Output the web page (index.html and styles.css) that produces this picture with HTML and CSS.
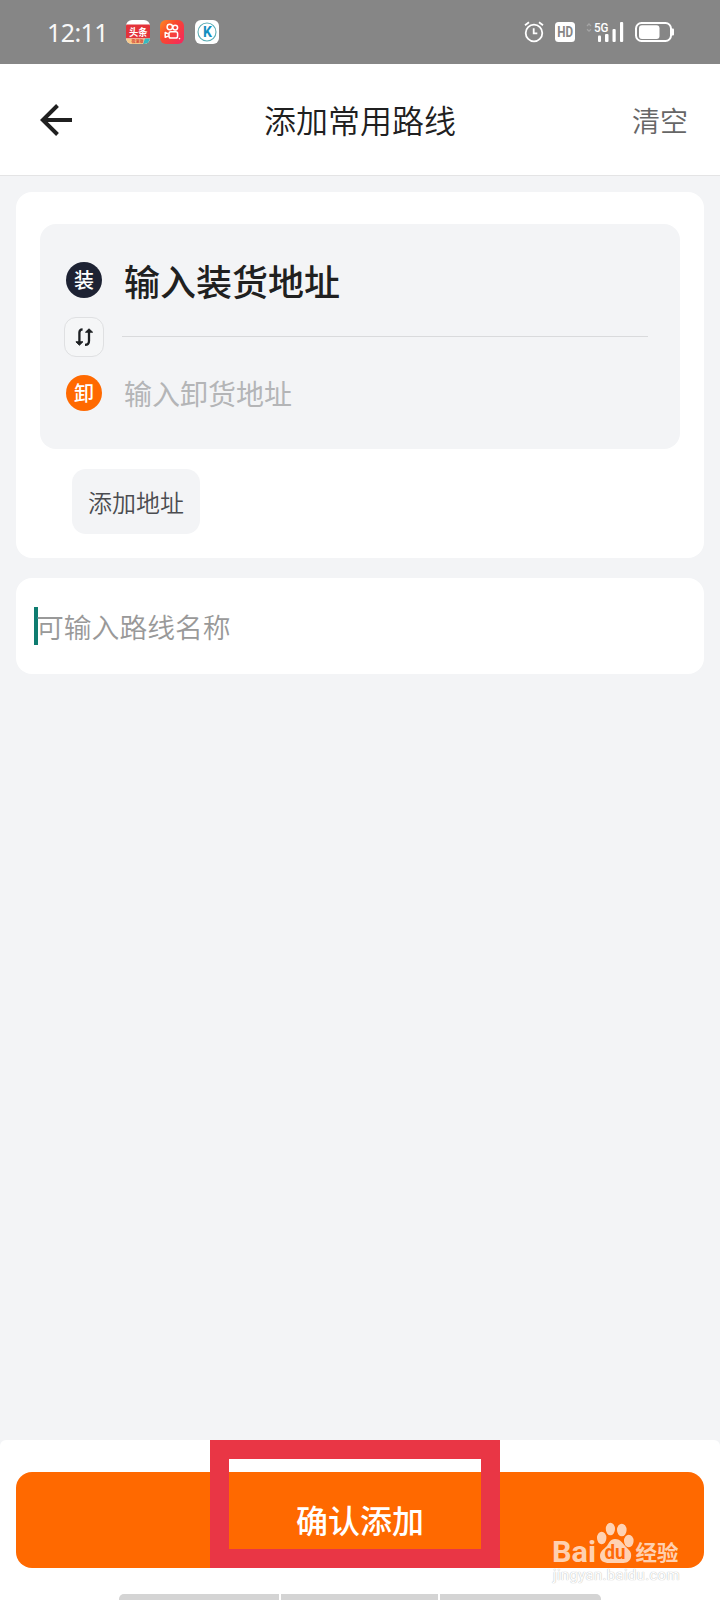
FILE: index.html
```html
<!DOCTYPE html>
<html lang="zh-CN">
<head>
<meta charset="utf-8">
<title>添加常用路线</title>
<link rel="stylesheet" href="styles.css">
</head>
<body>
<div class="screen">
  <div class="status">
    <span class="time">12:11</span>
    <svg class="app" width="24" height="24" viewBox="0 0 24 24">
      <defs><clipPath id="app-shape"><rect width="24" height="24" rx="6"/></clipPath></defs>
      <g clip-path="url(#app-shape)">
        <rect width="24" height="24" fill="#fff"/>
        <rect y="4.5" width="24" height="14" fill="#e3333a"/>
        <rect y="18.5" width="24" height="5.5" fill="#f6c98d"/>
        <path d="M19 18.5h5V24h-7z" fill="#36b9c2"/>
        <text class="cjk-bold" x="3" y="15.6" font-size="10" textLength="18.5" lengthAdjust="spacingAndGlyphs" fill="#fff">头条</text>
        <text class="cjk-bold" x="11.5" y="23" font-size="4" text-anchor="middle" fill="#d64a35">极速版</text>
      </g>
    </svg>
    <svg class="app" width="24" height="24" viewBox="0 0 24 24">
      <defs><linearGradient id="warm" x1="0" y1="0" x2="1" y2=".8"><stop offset="0" stop-color="#ff8a22"/><stop offset=".45" stop-color="#f8482f"/><stop offset="1" stop-color="#f52a5b"/></linearGradient></defs>
      <rect width="24" height="24" rx="6" fill="url(#warm)"/>
      <g fill="none" stroke="#fff" stroke-width="1.5">
        <circle cx="9.8" cy="7" r="2.7"/><circle cx="15.2" cy="7.6" r="2.4"/>
        <rect x="9" y="11.8" width="8.6" height="6.2" rx="1.8"/>
        <path d="M8.8 14.1 5.2 12.5v4.8l3.6-1.4" stroke-linejoin="round"/>
      </g>
      <circle cx="19.5" cy="18.6" r=".8" fill="#fff"/>
    </svg>
    <svg class="app" width="24" height="24" viewBox="0 0 24 24">
      <rect width="24" height="24" rx="6" fill="#fff"/>
      <circle cx="12" cy="12" r="9" fill="none" stroke="#5badb5" stroke-width="1.1"/>
      <text class="latin-bold" x="12.4" y="16.9" font-size="14" text-anchor="middle" fill="#148fc0">K</text>
    </svg>
    <div class="signals">
      <svg class="alarm" width="20" height="22" viewBox="0 0 20 22" fill="none" stroke="#fff">
        <circle cx="10" cy="12" r="8.3" stroke-width="1.8"/>
        <path d="M9.7 7.2v5.2h3.6" stroke-width="1.8"/>
        <path d="M1 4.3 5 1.2M19 4.3 15 1.2" stroke-width="1.8"/>
      </svg>
      <svg class="hd" width="20" height="20" viewBox="0 0 20 20">
        <rect width="20" height="20" rx="3.5" fill="#fff"/>
        <text class="latin-bold" x="2.2" y="15.2" font-size="14" textLength="15.8" lengthAdjust="spacingAndGlyphs" fill="#868686">HD</text>
      </svg>
      <svg class="cell" width="38" height="26" viewBox="0 -2 38 26">
        <path d="M1 5 3 3 5 5M1 8.2 3 10.2 5 8.2" fill="none" stroke="#a4a4a4" stroke-width="1.3"/>
        <text class="latin" x="8" y="11" font-size="13" textLength="14.5" lengthAdjust="spacingAndGlyphs" fill="#fff">5G</text>
        <g fill="#fff"><rect x="12" y="14.5" width="3" height="6.5" rx="1"/><rect x="19" y="13" width="3.5" height="8" rx="1"/><rect x="26.5" y="8" width="3.2" height="13" rx="1"/><rect x="34" y="1" width="3.2" height="20" rx="1"/></g>
      </svg>
      <svg class="battery" width="40" height="20" viewBox="0 0 40 20">
        <rect x="1" y="1" width="35" height="18" rx="5.5" fill="none" stroke="#fff" stroke-width="2"/>
        <rect x="4" y="3.3" width="20.5" height="13.6" rx="3" fill="#fff"/>
        <path d="M37 6.5h1q1 0 1 1v5q0 1-1 1h-1z" fill="#fff"/>
      </svg>
    </div>
  </div>

  <header class="header">
    <svg class="back" width="32" height="34" viewBox="0 0 32 34" fill="none" stroke="#202020" stroke-width="4"><path d="M17.5 2.5 2.8 17 17.5 31.5M3 17h29"/></svg>
    <h1 class="title">添加常用路线</h1>
    <span class="clear">清空</span>
  </header>

  <main class="content">
    <section class="card route">
      <div class="route-box">
        <div class="row"><span class="badge load">装</span><span class="primary">输入装货地址</span></div>
        <div class="row swap-row">
          <span class="swap">
            <svg width="20" height="20" viewBox="0 0 20 20" fill="none" stroke="#1d2023" stroke-width="2.3">
              <path d="M8.6 2.4Q5.4 2.6 5.4 5.5V16M11 17.8Q15 17.8 15 14V4"/>
              <path d="M1.9 14.8h7L5.4 18.2zM11.5 5.2 15 1.8 18.6 5.2z" fill="#1d2023" stroke-width="1" stroke-linejoin="round"/>
            </svg>
          </span>
          <span class="line"></span>
        </div>
        <div class="row"><span class="badge unload">卸</span><span class="secondary">输入卸货地址</span></div>
      </div>
      <span class="add">添加地址</span>
    </section>
    <section class="card name"><span class="caret"></span><span class="placeholder">可输入路线名称</span></section>
  </main>

  <footer class="footer">
    <div class="confirm">确认添加</div>
    <div class="home"><i></i><i></i><i></i></div>
    <div class="highlight"></div>
    <div class="watermark">
      <svg class="logo" width="136" height="50" viewBox="0 0 136 50">
        <g fill="#fff" fill-opacity=".7">
          <text class="latin-bold" x="-1" y="42" font-size="29" textLength="44" lengthAdjust="spacingAndGlyphs">Bai</text>
          <path d="M44 18a4.7 6.2 0 1 0 9.4 0a4.7 6.2 0 1 0-9.4 0zM52.8 9a4.6 6.3 0 1 0 9.2 0a4.6 6.3 0 1 0-9.2 0zM64 10a4.8 6.3 0 1 0 9.6 0a4.8 6.3 0 1 0-9.6 0zM71 21a4.8 6.2 0 1 0 9.6 0a4.8 6.2 0 1 0-9.6 0z"/>
          <path d="M62 19c6 0 8 5 11 8 3 3 6 5 5 10-1 5-5 6-9 6H56c-5 0-9-2-9-7 0-5 4-7 7-10 2-3 3-7 8-7z"/>
          <text class="cjk-bold" x="82.5" y="40" font-size="21" textLength="43" lengthAdjust="spacingAndGlyphs">经验</text>
        </g>
        <text class="latin-bold" x="51.5" y="38.8" font-size="20" textLength="21" lengthAdjust="spacingAndGlyphs" fill="#ff6a08">du</text>
      </svg>
      <span class="site">jingyan.baidu.com</span>
    </div>
  </footer>
</div>
</body>
</html>
```
FILE: styles.css
```css
* { box-sizing: border-box; }
body { margin: 0; background: #f3f4f6; }
.screen {
  width: 720px; height: 1600px; overflow: hidden;
  display: flex; flex-direction: column;
  background: #f3f4f6; color: #202020;
  font-family: "Noto Sans CJK SC", sans-serif;
}
svg { display: block; flex: none; }
.cjk-bold { font-family: "Noto Sans CJK SC", sans-serif; font-weight: 700; }
.latin { font-family: "Roboto", sans-serif; font-weight: 500; }
.latin-bold { font-family: "Roboto", sans-serif; font-weight: 700; }

.status { height: 64px; flex: none; display: flex; align-items: center; background: #868686; padding: 0 45px 0 47px; }
.time { width: 78.5px; margin-top: -1px; font: 400 25px/32px "Noto Sans", sans-serif; color: #f8f8f8; letter-spacing: -.6px; }
.app { margin-right: 10.5px; }
.signals { margin-left: auto; display: flex; align-items: center; }
.alarm { margin-right: 11px; }
.cell { margin-left: 11px; }
.battery { margin-left: 11.5px; }

.header { height: 112px; flex: none; display: grid; grid-template-columns: 1fr auto 1fr; align-items: center; padding: 0 32px 0 40px; background: #fff; border-bottom: 1px solid #e4e4e5; }
.title { margin: -1px 0 0 -8px; font-size: 32px; line-height: 48px; font-weight: 350; }
.clear { justify-self: end; margin-top: 1px; font-size: 28px; line-height: 40px; font-weight: 350; color: #666; }

.content { flex: 1; display: flex; flex-direction: column; gap: 20px; padding: 16px 16px 0; }
.card { background: #fff; border-radius: 16px; }
.route { height: 366px; padding: 32px 24px 0; }
.route-box { height: 225px; padding: 38px 32px 0 24px; background: #f3f4f6; border-radius: 16px; }
.row { height: 36px; display: flex; align-items: center; }
.badge { width: 36px; height: 36px; margin: 0 22px 0 2px; border-radius: 50%; color: #fff; font-size: 20px; line-height: 36px; font-weight: 500; text-align: center; }
.load { background: #1d2233; }
.unload { background: #ff6900; }
.primary { font-size: 36px; line-height: 52px; font-weight: 500; margin-top: -1px; }
.secondary { font-size: 28px; line-height: 40px; color: #b4b5b7; }
.swap-row { height: 40px; margin: 19px 0 18px; gap: 18px; }
.swap { width: 40px; height: 40px; display: grid; place-items: center; border: 1px solid #dfe0e2; border-radius: 12px; background: #f5f6f7; }
.line { flex: 1; height: 1px; margin-top: -1px; background: #d9dadc; }
.add { display: block; width: 128px; height: 65px; margin: 20px 0 0 32px; border-radius: 14px; background: #f3f4f6; color: #4b4c50; font-size: 24px; line-height: 66px; font-weight: 350; text-align: center; }
.name { height: 96px; display: flex; align-items: center; padding-left: 18px; }
.caret { width: 4px; height: 38px; background: #0e7c70; }
.placeholder { margin-left: -2px; margin-top: -1px; font-size: 27.8px; line-height: 40px; font-weight: 350; color: #999; }

.footer { position: relative; height: 160px; flex: none; padding: 32px 16px 0; background: #fff; border-radius: 6px 6px 0 0; }
.confirm { height: 96px; border-radius: 16px; background: #ff6900; color: #fff; font-size: 32px; line-height: 95px; font-weight: 500; text-align: center; }
.home { display: grid; grid-template-columns: 160px 157px 161px; gap: 2px; height: 6px; width: 482px; margin: 26px 0 0 103px; border-radius: 5px 5px 0 0; overflow: hidden; }
.home i { background: #d4d4d4; }
.highlight { position: absolute; left: 210px; top: -.5px; width: 290px; height: 128.5px; border: 19.5px solid #e93645; }
.watermark { position: absolute; left: 553px; top: 80px; width: 136px; }
.logo { overflow: visible; }
.site { display: block; margin-top: -3px; font: 400 15px/16px "Roboto", sans-serif; color: #fff; letter-spacing: .3px; text-shadow: 0 0 1px #b8b8b8, 0 0 1px #d0d0d0; white-space: nowrap; }
```
